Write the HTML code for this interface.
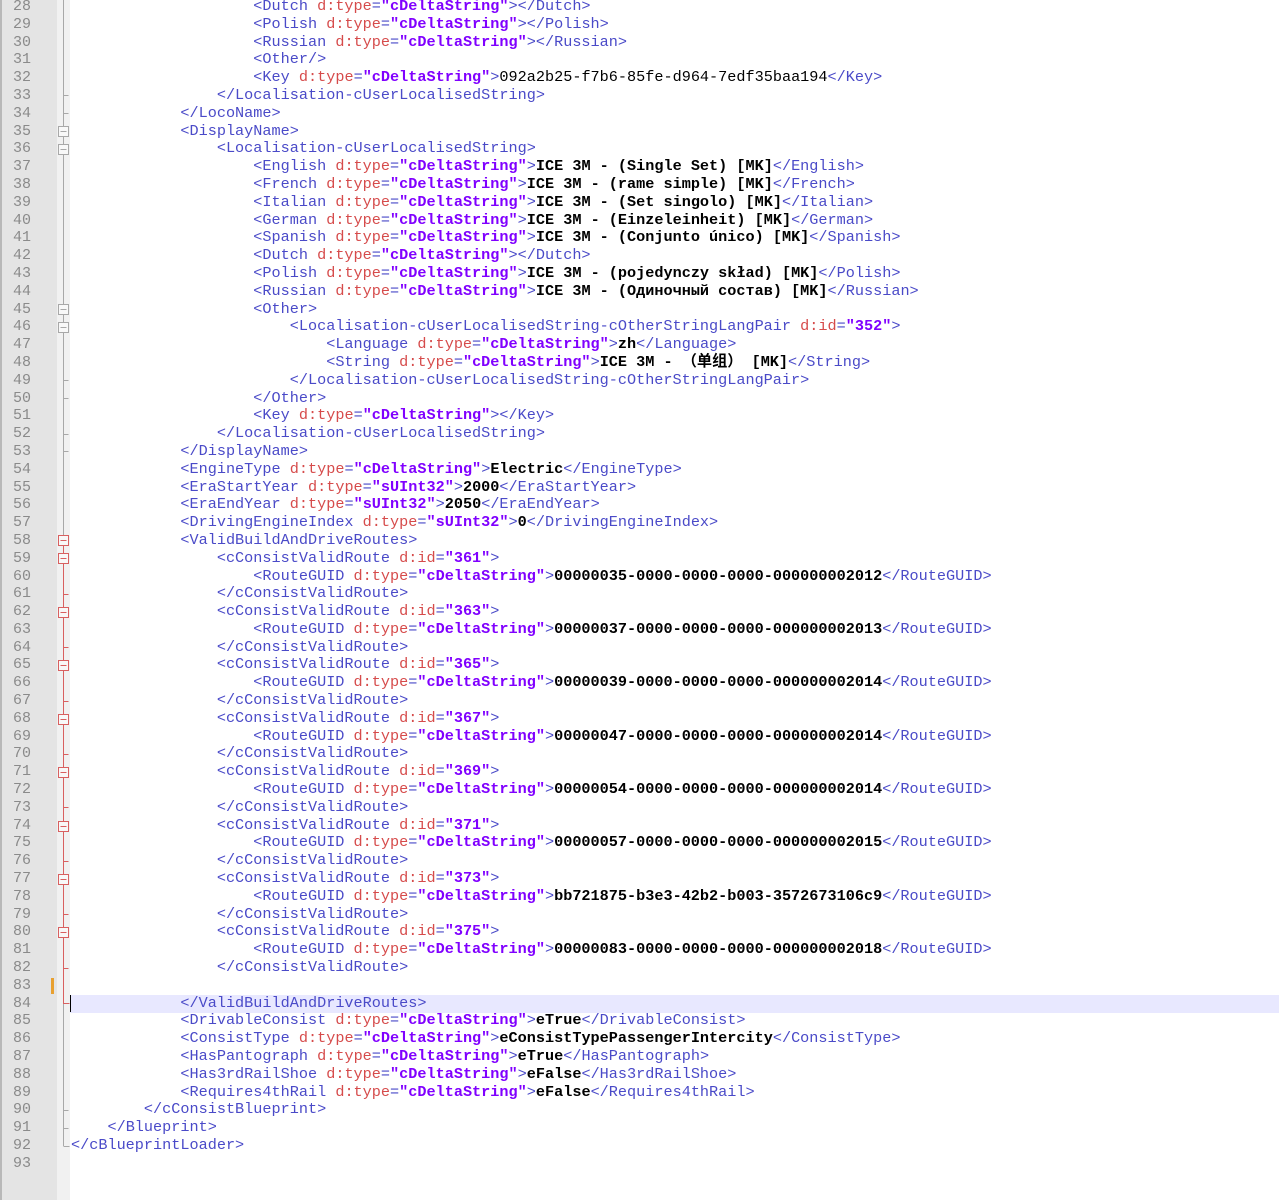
<!DOCTYPE html>
<html><head><meta charset="utf-8">
<style>
html,body{margin:0;padding:0;background:#fff;width:1279px;height:1200px;overflow:hidden}
#nums{position:absolute;left:0;top:0;width:57px;height:1200px;background:#e4e4e4;border-left:2px solid #b8b8b8;box-sizing:border-box}
#fold{position:absolute;left:57px;top:0;width:13px;height:1200px;background:#f1f1f1}
pre{margin:0;font-family:"Liberation Mono","Noto Sans CJK SC",monospace;font-size:15.2px;line-height:17.8px;position:absolute;top:-2px;white-space:pre}
#ln{left:0;width:31px;text-align:right;color:#8a8a8a;font-size:15px}
#code{left:71px;color:#000}
.t{color:#4a4ac8}.a{color:#d64b4b}.v{color:#8000ff;font-weight:bold}.x{font-weight:bold;color:#000}
#hl{position:absolute;left:70px;top:994.8px;width:1209px;height:17.8px;background:#e8e8ff}
#caret{position:absolute;left:70px;top:995px;width:1px;height:17px;background:#000}
#chg{position:absolute;left:51px;top:978px;width:3px;height:16px;background:#e8a030}
</style></head><body>
<div id="nums"></div><div id="fold"></div>
<div id="hl"></div><div id="chg"></div>
<svg style="position:absolute;left:0;top:0" width="80" height="1200">
<g stroke="#a8a8a8" fill="none" stroke-width="1">
<line x1="63.5" y1="0" x2="63.5" y2="536"/>
<line x1="63.5" y1="1004" x2="63.5" y2="1146"/>
<path d="M63.5 95.5h5M63.5 113.5h5M63.5 380.5h5M63.5 398.5h5M63.5 434.5h5M63.5 451.5h5M63.5 1110.5h5M63.5 1128.5h5M63.5 1146.5h6"/>
<g fill="#f8f8f8">
<rect x="58.5" y="126.5" width="10" height="10"/><rect x="58.5" y="144.5" width="10" height="10"/>
<rect x="58.5" y="304.5" width="10" height="10"/><rect x="58.5" y="322.5" width="10" height="10"/>
</g>
<path d="M60.5 131.5h6M60.5 149.5h6M60.5 309.5h6M60.5 327.5h6"/>
</g>
<g stroke="#d86060" fill="none" stroke-width="1">
<line x1="63.5" y1="536" x2="63.5" y2="1004"/>
<path d="M63.5 594.5h5M63.5 647.5h5M63.5 701.5h5M63.5 754.5h5M63.5 807.5h5M63.5 861.5h5M63.5 914.5h5M63.5 968.5h5M63.5 1003.5h6"/>
<g fill="#f8f8f8">
<rect x="58.5" y="535.5" width="10" height="10"/><rect x="58.5" y="553.5" width="10" height="10"/>
<rect x="58.5" y="607.5" width="10" height="10"/><rect x="58.5" y="660.5" width="10" height="10"/>
<rect x="58.5" y="714.5" width="10" height="10"/><rect x="58.5" y="767.5" width="10" height="10"/>
<rect x="58.5" y="821.5" width="10" height="10"/><rect x="58.5" y="874.5" width="10" height="10"/>
<rect x="58.5" y="927.5" width="10" height="10"/>
</g>
<path d="M60.5 540.5h6M60.5 558.5h6M60.5 612.5h6M60.5 665.5h6M60.5 719.5h6M60.5 772.5h6M60.5 826.5h6M60.5 879.5h6M60.5 932.5h6"/>
</g>
</svg>
<div id="caret"></div>
<pre id="ln">28
29
30
31
32
33
34
35
36
37
38
39
40
41
42
43
44
45
46
47
48
49
50
51
52
53
54
55
56
57
58
59
60
61
62
63
64
65
66
67
68
69
70
71
72
73
74
75
76
77
78
79
80
81
82
83
84
85
86
87
88
89
90
91
92
93</pre>
<pre id="code">                    <span class="t">&lt;Dutch</span> <span class="a">d:type</span><span class="t">=</span><span class="v">"cDeltaString"</span><span class="t">&gt;&lt;/Dutch&gt;</span>
                    <span class="t">&lt;Polish</span> <span class="a">d:type</span><span class="t">=</span><span class="v">"cDeltaString"</span><span class="t">&gt;&lt;/Polish&gt;</span>
                    <span class="t">&lt;Russian</span> <span class="a">d:type</span><span class="t">=</span><span class="v">"cDeltaString"</span><span class="t">&gt;&lt;/Russian&gt;</span>
                    <span class="t">&lt;Other/&gt;</span>
                    <span class="t">&lt;Key</span> <span class="a">d:type</span><span class="t">=</span><span class="v">"cDeltaString"</span><span class="t">&gt;</span>092a2b25-f7b6-85fe-d964-7edf35baa194<span class="t">&lt;/Key&gt;</span>
                <span class="t">&lt;/Localisation-cUserLocalisedString&gt;</span>
            <span class="t">&lt;/LocoName&gt;</span>
            <span class="t">&lt;DisplayName&gt;</span>
                <span class="t">&lt;Localisation-cUserLocalisedString&gt;</span>
                    <span class="t">&lt;English</span> <span class="a">d:type</span><span class="t">=</span><span class="v">"cDeltaString"</span><span class="t">&gt;</span><span class="x">ICE 3M - (Single Set) [MK]</span><span class="t">&lt;/English&gt;</span>
                    <span class="t">&lt;French</span> <span class="a">d:type</span><span class="t">=</span><span class="v">"cDeltaString"</span><span class="t">&gt;</span><span class="x">ICE 3M - (rame simple) [MK]</span><span class="t">&lt;/French&gt;</span>
                    <span class="t">&lt;Italian</span> <span class="a">d:type</span><span class="t">=</span><span class="v">"cDeltaString"</span><span class="t">&gt;</span><span class="x">ICE 3M - (Set singolo) [MK]</span><span class="t">&lt;/Italian&gt;</span>
                    <span class="t">&lt;German</span> <span class="a">d:type</span><span class="t">=</span><span class="v">"cDeltaString"</span><span class="t">&gt;</span><span class="x">ICE 3M - (Einzeleinheit) [MK]</span><span class="t">&lt;/German&gt;</span>
                    <span class="t">&lt;Spanish</span> <span class="a">d:type</span><span class="t">=</span><span class="v">"cDeltaString"</span><span class="t">&gt;</span><span class="x">ICE 3M - (Conjunto único) [MK]</span><span class="t">&lt;/Spanish&gt;</span>
                    <span class="t">&lt;Dutch</span> <span class="a">d:type</span><span class="t">=</span><span class="v">"cDeltaString"</span><span class="t">&gt;&lt;/Dutch&gt;</span>
                    <span class="t">&lt;Polish</span> <span class="a">d:type</span><span class="t">=</span><span class="v">"cDeltaString"</span><span class="t">&gt;</span><span class="x">ICE 3M - (pojedynczy skład) [MK]</span><span class="t">&lt;/Polish&gt;</span>
                    <span class="t">&lt;Russian</span> <span class="a">d:type</span><span class="t">=</span><span class="v">"cDeltaString"</span><span class="t">&gt;</span><span class="x">ICE 3M - (Одиночный состав) [MK]</span><span class="t">&lt;/Russian&gt;</span>
                    <span class="t">&lt;Other&gt;</span>
                        <span class="t">&lt;Localisation-cUserLocalisedString-cOtherStringLangPair</span> <span class="a">d:id</span><span class="t">=</span><span class="v">"352"</span><span class="t">&gt;</span>
                            <span class="t">&lt;Language</span> <span class="a">d:type</span><span class="t">=</span><span class="v">"cDeltaString"</span><span class="t">&gt;</span><span class="x">zh</span><span class="t">&lt;/Language&gt;</span>
                            <span class="t">&lt;String</span> <span class="a">d:type</span><span class="t">=</span><span class="v">"cDeltaString"</span><span class="t">&gt;</span><span class="x">ICE 3M - （单组） [MK]</span><span class="t">&lt;/String&gt;</span>
                        <span class="t">&lt;/Localisation-cUserLocalisedString-cOtherStringLangPair&gt;</span>
                    <span class="t">&lt;/Other&gt;</span>
                    <span class="t">&lt;Key</span> <span class="a">d:type</span><span class="t">=</span><span class="v">"cDeltaString"</span><span class="t">&gt;&lt;/Key&gt;</span>
                <span class="t">&lt;/Localisation-cUserLocalisedString&gt;</span>
            <span class="t">&lt;/DisplayName&gt;</span>
            <span class="t">&lt;EngineType</span> <span class="a">d:type</span><span class="t">=</span><span class="v">"cDeltaString"</span><span class="t">&gt;</span><span class="x">Electric</span><span class="t">&lt;/EngineType&gt;</span>
            <span class="t">&lt;EraStartYear</span> <span class="a">d:type</span><span class="t">=</span><span class="v">"sUInt32"</span><span class="t">&gt;</span><span class="x">2000</span><span class="t">&lt;/EraStartYear&gt;</span>
            <span class="t">&lt;EraEndYear</span> <span class="a">d:type</span><span class="t">=</span><span class="v">"sUInt32"</span><span class="t">&gt;</span><span class="x">2050</span><span class="t">&lt;/EraEndYear&gt;</span>
            <span class="t">&lt;DrivingEngineIndex</span> <span class="a">d:type</span><span class="t">=</span><span class="v">"sUInt32"</span><span class="t">&gt;</span><span class="x">0</span><span class="t">&lt;/DrivingEngineIndex&gt;</span>
            <span class="t">&lt;ValidBuildAndDriveRoutes&gt;</span>
                <span class="t">&lt;cConsistValidRoute</span> <span class="a">d:id</span><span class="t">=</span><span class="v">"361"</span><span class="t">&gt;</span>
                    <span class="t">&lt;RouteGUID</span> <span class="a">d:type</span><span class="t">=</span><span class="v">"cDeltaString"</span><span class="t">&gt;</span><span class="x">00000035-0000-0000-0000-000000002012</span><span class="t">&lt;/RouteGUID&gt;</span>
                <span class="t">&lt;/cConsistValidRoute&gt;</span>
                <span class="t">&lt;cConsistValidRoute</span> <span class="a">d:id</span><span class="t">=</span><span class="v">"363"</span><span class="t">&gt;</span>
                    <span class="t">&lt;RouteGUID</span> <span class="a">d:type</span><span class="t">=</span><span class="v">"cDeltaString"</span><span class="t">&gt;</span><span class="x">00000037-0000-0000-0000-000000002013</span><span class="t">&lt;/RouteGUID&gt;</span>
                <span class="t">&lt;/cConsistValidRoute&gt;</span>
                <span class="t">&lt;cConsistValidRoute</span> <span class="a">d:id</span><span class="t">=</span><span class="v">"365"</span><span class="t">&gt;</span>
                    <span class="t">&lt;RouteGUID</span> <span class="a">d:type</span><span class="t">=</span><span class="v">"cDeltaString"</span><span class="t">&gt;</span><span class="x">00000039-0000-0000-0000-000000002014</span><span class="t">&lt;/RouteGUID&gt;</span>
                <span class="t">&lt;/cConsistValidRoute&gt;</span>
                <span class="t">&lt;cConsistValidRoute</span> <span class="a">d:id</span><span class="t">=</span><span class="v">"367"</span><span class="t">&gt;</span>
                    <span class="t">&lt;RouteGUID</span> <span class="a">d:type</span><span class="t">=</span><span class="v">"cDeltaString"</span><span class="t">&gt;</span><span class="x">00000047-0000-0000-0000-000000002014</span><span class="t">&lt;/RouteGUID&gt;</span>
                <span class="t">&lt;/cConsistValidRoute&gt;</span>
                <span class="t">&lt;cConsistValidRoute</span> <span class="a">d:id</span><span class="t">=</span><span class="v">"369"</span><span class="t">&gt;</span>
                    <span class="t">&lt;RouteGUID</span> <span class="a">d:type</span><span class="t">=</span><span class="v">"cDeltaString"</span><span class="t">&gt;</span><span class="x">00000054-0000-0000-0000-000000002014</span><span class="t">&lt;/RouteGUID&gt;</span>
                <span class="t">&lt;/cConsistValidRoute&gt;</span>
                <span class="t">&lt;cConsistValidRoute</span> <span class="a">d:id</span><span class="t">=</span><span class="v">"371"</span><span class="t">&gt;</span>
                    <span class="t">&lt;RouteGUID</span> <span class="a">d:type</span><span class="t">=</span><span class="v">"cDeltaString"</span><span class="t">&gt;</span><span class="x">00000057-0000-0000-0000-000000002015</span><span class="t">&lt;/RouteGUID&gt;</span>
                <span class="t">&lt;/cConsistValidRoute&gt;</span>
                <span class="t">&lt;cConsistValidRoute</span> <span class="a">d:id</span><span class="t">=</span><span class="v">"373"</span><span class="t">&gt;</span>
                    <span class="t">&lt;RouteGUID</span> <span class="a">d:type</span><span class="t">=</span><span class="v">"cDeltaString"</span><span class="t">&gt;</span><span class="x">bb721875-b3e3-42b2-b003-3572673106c9</span><span class="t">&lt;/RouteGUID&gt;</span>
                <span class="t">&lt;/cConsistValidRoute&gt;</span>
                <span class="t">&lt;cConsistValidRoute</span> <span class="a">d:id</span><span class="t">=</span><span class="v">"375"</span><span class="t">&gt;</span>
                    <span class="t">&lt;RouteGUID</span> <span class="a">d:type</span><span class="t">=</span><span class="v">"cDeltaString"</span><span class="t">&gt;</span><span class="x">00000083-0000-0000-0000-000000002018</span><span class="t">&lt;/RouteGUID&gt;</span>
                <span class="t">&lt;/cConsistValidRoute&gt;</span>

            <span class="t">&lt;/ValidBuildAndDriveRoutes&gt;</span>
            <span class="t">&lt;DrivableConsist</span> <span class="a">d:type</span><span class="t">=</span><span class="v">"cDeltaString"</span><span class="t">&gt;</span><span class="x">eTrue</span><span class="t">&lt;/DrivableConsist&gt;</span>
            <span class="t">&lt;ConsistType</span> <span class="a">d:type</span><span class="t">=</span><span class="v">"cDeltaString"</span><span class="t">&gt;</span><span class="x">eConsistTypePassengerIntercity</span><span class="t">&lt;/ConsistType&gt;</span>
            <span class="t">&lt;HasPantograph</span> <span class="a">d:type</span><span class="t">=</span><span class="v">"cDeltaString"</span><span class="t">&gt;</span><span class="x">eTrue</span><span class="t">&lt;/HasPantograph&gt;</span>
            <span class="t">&lt;Has3rdRailShoe</span> <span class="a">d:type</span><span class="t">=</span><span class="v">"cDeltaString"</span><span class="t">&gt;</span><span class="x">eFalse</span><span class="t">&lt;/Has3rdRailShoe&gt;</span>
            <span class="t">&lt;Requires4thRail</span> <span class="a">d:type</span><span class="t">=</span><span class="v">"cDeltaString"</span><span class="t">&gt;</span><span class="x">eFalse</span><span class="t">&lt;/Requires4thRail&gt;</span>
        <span class="t">&lt;/cConsistBlueprint&gt;</span>
    <span class="t">&lt;/Blueprint&gt;</span>
<span class="t">&lt;/cBlueprintLoader&gt;</span>
</pre>
</body></html>
